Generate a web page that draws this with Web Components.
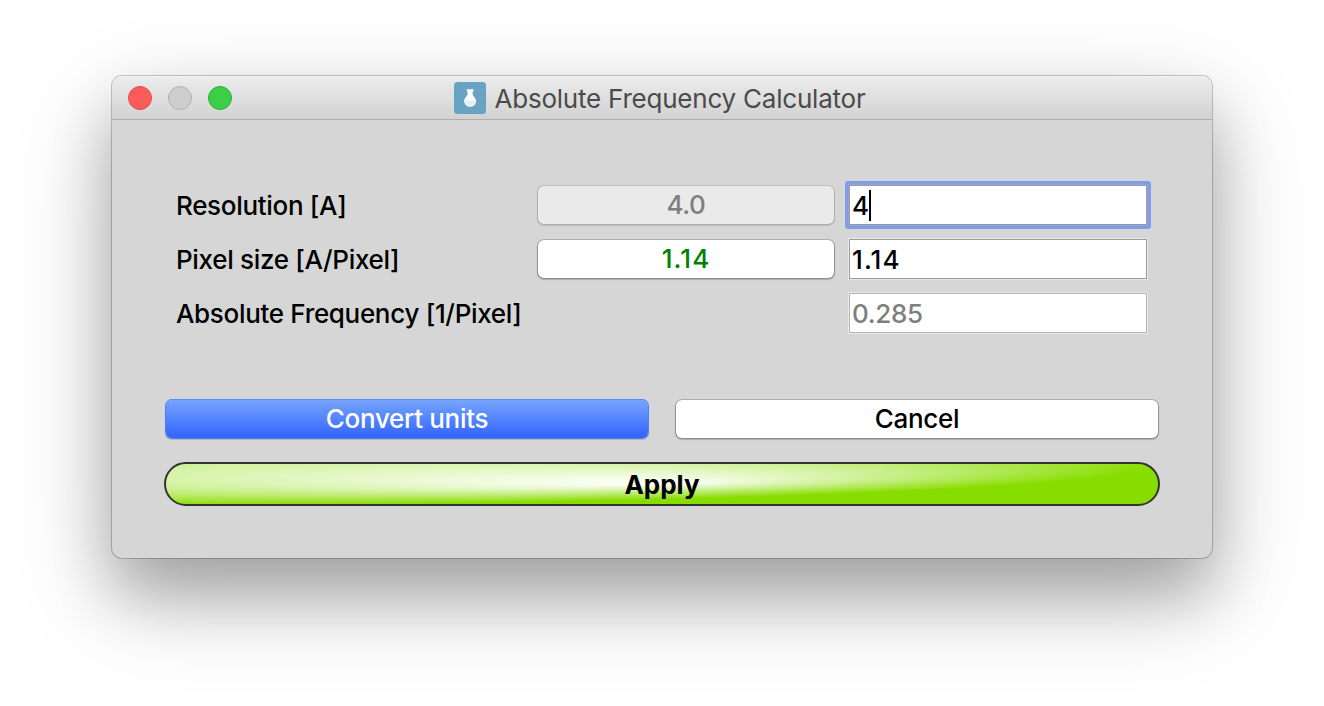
<!DOCTYPE html>
<html lang="en"><head><meta charset="utf-8"><title>Absolute Frequency Calculator</title>
<style>
html,body{margin:0;background:#fff;height:706px;overflow:hidden}
body{box-sizing:border-box;padding:76px 112px 0;font-family:Inter,"Liberation Sans",sans-serif;font-size:26px;font-weight:450;color:#000}
</style></head><body>
<app-window><span slot="title">Absolute Frequency Calculator</span><frequency-form></frequency-form></app-window>
<script>
const define=(name,html)=>customElements.define(name,class extends HTMLElement{
  connectedCallback(){
    if(this.shadowRoot)return;
    const t=document.createElement('template');t.innerHTML=html;
    this.attachShadow({mode:'open'}).append(t.content.cloneNode(true));
  }
});
define('text-run',`<style>:host{display:inline-block;white-space:pre;line-height:32px;letter-spacing:var(--tracking,-.32px)}</style><slot></slot>`);
define('flask-icon',`<style>:host{display:block;width:32px;height:32px}svg{display:block}</style>
<svg width="32" height="32" viewBox="0 0 32 32"><rect width="32" height="32" rx="3.5" fill="#69a3c4"/>
<path d="M12.700 7.200h6.800v2h-.8v3.200c.5 2.300 3.400 3.400 3.400 6.700a6 5.700 0 0 1-12 0c0-3.300 2.900-4.400 3.400-6.700V9.200h-.8z" fill="#fafdff"/>
<path d="M11.500 18q4.600 1.500 9.200 0a4.700 4.700 0 1 1-9.200 0z" fill="#e5eef3"/></svg>`);
define('title-bar',`<style>
:host{display:grid;grid-template-columns:1fr auto 1fr;align-items:center;height:44px;box-sizing:border-box;padding:0 16px;border-bottom:1px solid #adadad;background:linear-gradient(#ececec,#d2d2d2);box-shadow:inset 0 1px #f4f4f4;border-radius:10px 10px 0 0}
.lights{display:flex;gap:16px}
i{display:block;width:24px;height:24px;box-sizing:border-box;border-radius:50%;border:1px solid #e54b4c;background:#fc5b5b}
i:nth-child(2){background:#cecece;border-color:#b0b0b0}
i:nth-child(3){background:#3bcf48;border-color:#2bb035}
.t{display:flex;gap:8px;align-items:center;color:#4b4b4b;margin-left:-4px}
text-run{letter-spacing:-.22px;font-weight:400;padding-top:2px}
</style><div class="lights"><i></i><i></i><i></i></div><div class="t"><flask-icon></flask-icon><text-run><slot></slot></text-run></div>`);
define('app-window',`<style>
:host{display:block;width:1100px;height:482px;background:#d6d6d6;border-radius:10px;box-shadow:0 0 0 1px rgba(0,0,0,.21),0 36px 100px rgba(0,0,0,.23),0 36px 60px rgba(0,0,0,.21)}
</style><title-bar><slot name="title"></slot></title-bar><slot></slot>`);
define('push-button',`<style>
:host{display:flex;align-items:center;justify-content:center;height:38px;background:#fff;border-radius:6px;box-shadow:0 0 0 1px rgba(0,0,0,.17),0 1px 1px 1px rgba(0,0,0,.2)}
:host([off]){background:#eaeaea;color:#7f7f7f;box-shadow:0 0 0 1px rgba(0,0,0,.1),0 1px 1px 1px rgba(0,0,0,.1)}
:host([primary]){background:linear-gradient(#76a4fd,#3163ff);color:#fff;box-shadow:0 -1px #5b91f5,0 0 0 1px #4a80f8,0 1px 1px 1px rgba(0,0,0,.15)}
:host([green]){color:#008000}
</style><text-run><slot></slot></text-run>`);
define('text-field',`<style>
:host{display:flex;align-items:center;height:40px;box-sizing:border-box;padding:2px 0 0 2px;background:#fff;border:1px solid #9b9b9b;box-shadow:0 0 0 1px #e9e9e9}
:host([off]){color:#7f7f7f;border-color:#b5b5b5}
:host([focus]){position:relative;box-shadow:0 0 0 1px #8da5e6}
:host([focus])::before{content:"";position:absolute;inset:-5px;border:3px solid #839ce6;border-radius:3px}
:host([focus])::after{content:"";width:2px;height:31px;background:#000;margin:-2px 0 0 0}
</style><text-run><slot></slot></text-run>`);
define('apply-button',`<style>
:host{display:grid;height:44px;font-weight:700}
svg,text-run{grid-area:1/1}svg{display:block}
text-run{place-self:center;margin-top:2px;letter-spacing:0}
</style><svg width="996" height="44"><defs><radialGradient id="g" cx="0" cy="0" r="1" fx=".5" fy=".5"><stop stop-color="#fff"/><stop offset="1" stop-color="#8d0"/></radialGradient></defs><rect x="1" y="1" width="994" height="42" rx="21" fill="url(#g)" stroke="#333" stroke-width="2"/></svg><text-run><slot></slot></text-run>`);
define('frequency-form',`<style>
:host{display:block;padding:66px 53px 0}
.rows{display:grid;grid-template-columns:361px 296px 298px;grid-template-rows:40px 40px 40px;row-gap:14px;padding-left:12px;margin-top:-1px}
.rows text-field{margin-left:15px;margin-right:-15px}
.rows push-button{align-self:center}
.label{place-self:center start;margin-top:1px;margin-left:-1px}
.num{--tracking:1.1px}
.pair{display:grid;grid-template-columns:1fr 1fr;gap:28px;margin-top:67px;padding:0 1px}
apply-button{margin:24px -1px 0}
</style><div class="rows">
<text-run class="label">Resolution [A]</text-run><push-button off>4.0</push-button><text-field focus>4</text-field>
<text-run class="label">Pixel size [A/Pixel]</text-run><push-button class="num" green>1.14</push-button><text-field class="num">1.14</text-field>
<text-run class="label">Absolute Frequency [1/Pixel]</text-run><span></span><text-field off>0.285</text-field></div>
<div class="pair"><push-button primary>Convert units</push-button><push-button>Cancel</push-button></div>
<apply-button>Apply</apply-button>`);
</script></body></html>
